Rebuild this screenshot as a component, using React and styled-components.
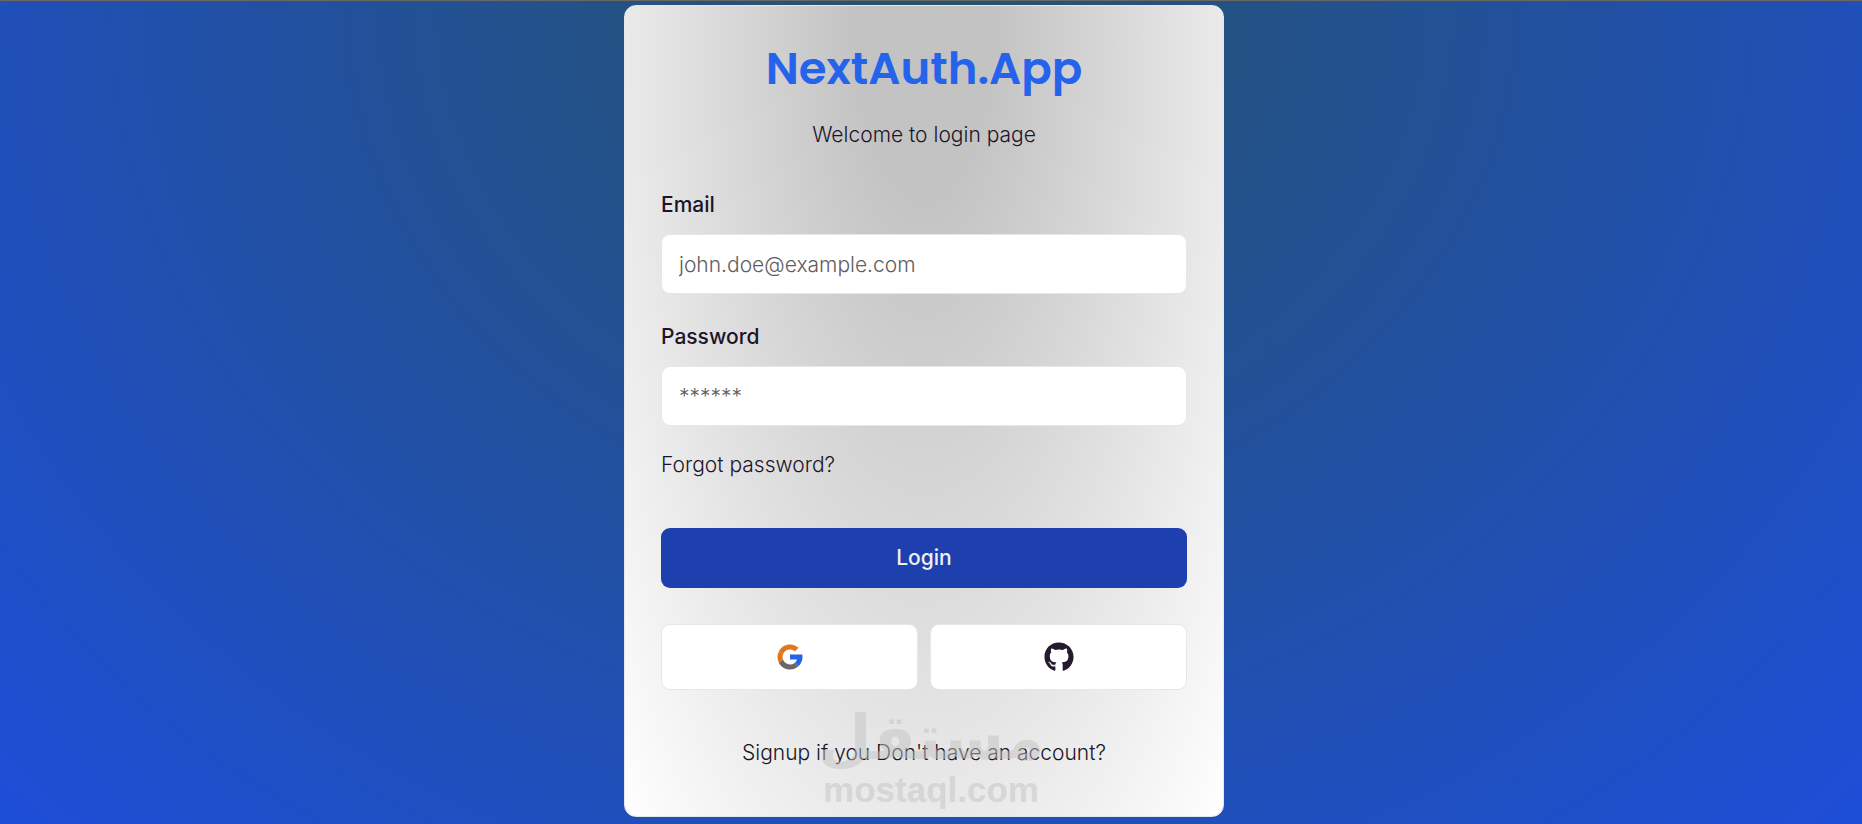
import { useState } from "react";
import styled, { createGlobalStyle } from "styled-components";
import { FaGithub } from "react-icons/fa";

export default function App() {
  const [email, setEmail] = useState("");
  const [password, setPassword] = useState("");

  return (
    <>
      <GlobalStyle />
      <StyledPage>
        <StyledCard>
          <StyledTitle>NextAuth.App</StyledTitle>
          <StyledSubtitle>Welcome to login page</StyledSubtitle>

          <StyledForm onSubmit={(event) => event.preventDefault()}>
            <StyledField>
              <StyledLabel htmlFor="email">Email</StyledLabel>
              <StyledInput
                id="email"
                type="email"
                placeholder="john.doe@example.com"
                value={email}
                onChange={(event) => setEmail(event.target.value)}
              />
            </StyledField>
            <StyledField>
              <StyledLabel htmlFor="password">Password</StyledLabel>
              <StyledInput
                id="password"
                type="password"
                placeholder="******"
                value={password}
                onChange={(event) => setPassword(event.target.value)}
              />
            </StyledField>
            <StyledLink href="#forgot">Forgot password?</StyledLink>
            <StyledLoginButton type="submit">Login</StyledLoginButton>
          </StyledForm>

          <StyledSocials>
            <StyledSocialButton type="button" aria-label="Google">
              <GoogleIcon />
            </StyledSocialButton>
            <StyledSocialButton type="button" aria-label="GitHub">
              <FaGithub size={30} />
            </StyledSocialButton>
          </StyledSocials>

          <StyledLink href="#signup" $center>
            Signup if you Don't have an account?
          </StyledLink>
        </StyledCard>

        <StyledWatermark>
          <StyledWatermarkName lang="ar" dir="rtl">
            مستقل
          </StyledWatermarkName>
          <StyledWatermarkSite>mostaql.com</StyledWatermarkSite>
        </StyledWatermark>
      </StyledPage>
    </>
  );
}

function GoogleIcon() {
  return (
    <svg width="30" height="30" viewBox="0 0 48 48" aria-hidden="true">
      <path
        fill="#2563eb"
        d="M43.611 20.083H24v8h11.303a12.04 12.04 0 0 1-4.087 5.571l6.19 5.238C36.971 39.205 44 34 44 24c0-1.341-.138-2.65-.389-3.917z"
      />
      <path
        fill="#e0771e"
        d="M6.306 14.691l6.571 4.819C14.655 15.108 18.961 12 24 12c3.059 0 5.842 1.154 7.961 3.039l5.657-5.657C34.046 6.053 29.268 4 24 4 16.318 4 9.656 8.337 6.306 14.691z"
      />
      <path
        fill="#e0771e"
        d="M6.306 14.691A19.9 19.9 0 0 0 4 24c0 3.2.76 6.26 2.195 9.079l6.522-5.025A12 12 0 0 1 12.877 19.51z"
      />
      <path
        fill="#6b6765"
        d="M24 44c5.166 0 9.86-1.977 13.409-5.192l-6.19-5.238A11.91 11.91 0 0 1 24 36c-5.202 0-9.619-3.317-11.283-7.946l-6.522 5.025C9.505 39.556 16.227 44 24 44z"
      />
    </svg>
  );
}

const GlobalStyle = createGlobalStyle`
  *, *::before, *::after {
    box-sizing: border-box;
  }

  body {
    margin: 0;
    color: #1c1528;
    font-family: Inter, "Liberation Sans", sans-serif;
    font-size: 21px;
    font-weight: 300;
    line-height: 30px;
  }
`;

const StyledPage = styled.main`
  position: relative;
  display: flex;
  justify-content: center;
  align-items: flex-start;
  min-height: 100vh;
  padding: 4px 14px 6px 0;
  border-top: 1px solid #6b6765;
  background: radial-gradient(at 50% 0%, #26536b, #1d4ed8);
`;

const StyledCard = styled.section`
  display: flex;
  flex-direction: column;
  width: 100%;
  max-width: 600px;
  padding: 36px 36px 48px;
  border: 1px solid #e5e7eb;
  border-radius: 12px;
  background: radial-gradient(at 50% 0%, #c3c3c4 16%, #ffffff) border-box;
`;

const StyledTitle = styled.h1`
  margin: 0 0 24px;
  color: #2563eb;
  font-family: Poppins, Inter, sans-serif;
  font-size: 45px;
  font-weight: 600;
  line-height: 54px;
  text-align: center;
`;

const StyledSubtitle = styled.p`
  margin: 0 0 40px;
  text-align: center;
`;

const StyledForm = styled.form`
  display: flex;
  flex-direction: column;
`;

const StyledField = styled.div`
  display: flex;
  flex-direction: column;
  gap: 14px;

  & + & {
    margin-top: 28px;
  }

  & + a {
    margin-top: 24px;
  }
`;

const StyledLabel = styled.label`
  font-weight: 500;
`;

const StyledInput = styled.input`
  width: 100%;
  height: 60px;
  padding: 0 17px;
  border: 1px solid #e5e7eb;
  border-radius: 9px;
  background: #ffffff;
  color: inherit;
  font: inherit;

  &::placeholder {
    color: #5f5c5e;
    opacity: 1;
  }
`;

const StyledLink = styled.a`
  align-self: ${({ $center }) => ($center ? "center" : "flex-start")};
  color: inherit;
  text-decoration: none;
`;

const StyledLoginButton = styled.button`
  height: 60px;
  margin-top: 48px;
  border: 0;
  border-radius: 9px;
  background: #1e40af;
  color: #f0f0f0;
  font: inherit;
  font-weight: 500;
  cursor: pointer;
`;

const StyledSocials = styled.div`
  display: grid;
  grid-template-columns: 1fr 1fr;
  gap: 12px;
  margin: 36px 0 48px;
`;

const StyledSocialButton = styled.button`
  display: flex;
  justify-content: center;
  align-items: center;
  height: 66px;
  border: 1px solid #e5e7eb;
  border-radius: 9px;
  background: #ffffff;
  color: #231a2c;
  cursor: pointer;
`;

const StyledWatermark = styled.div`
  position: absolute;
  right: 0;
  bottom: 16px;
  left: 0;
  display: flex;
  flex-direction: column;
  align-items: center;
  gap: 4px;
  color: #c4c4c4;
  font-weight: 700;
  opacity: 0.5;
  pointer-events: none;
`;

const StyledWatermarkName = styled.span`
  font-family: "DejaVu Sans", sans-serif;
  font-size: 62px;
  line-height: 60px;
`;

const StyledWatermarkSite = styled.span`
  font-family: "Liberation Sans", sans-serif;
  font-size: 35px;
  line-height: 36px;
`;
